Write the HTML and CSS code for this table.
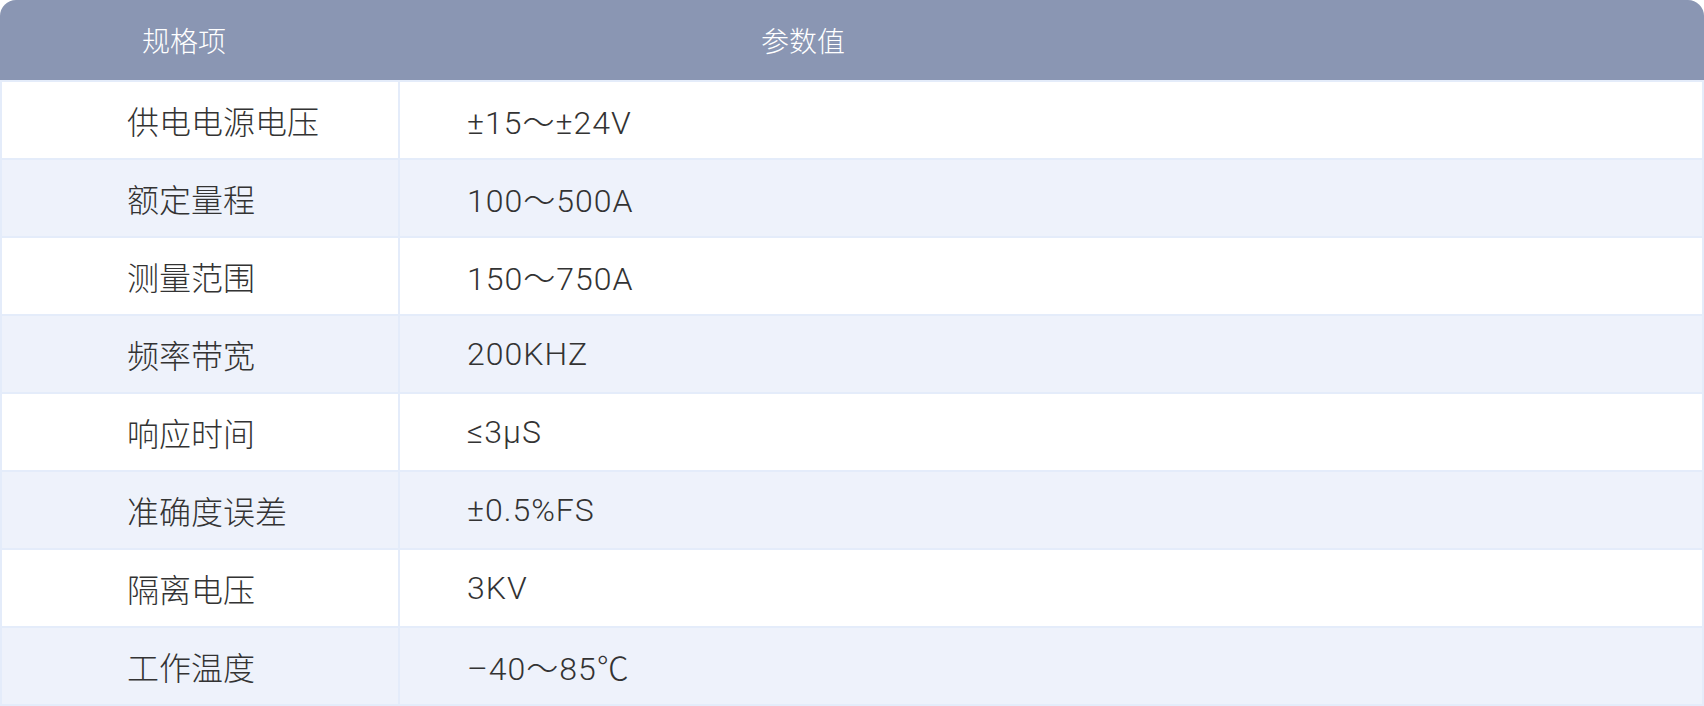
FILE: index.html
```html
<!DOCTYPE html>
<html lang="zh-CN">
<head>
<meta charset="utf-8">
<title>规格参数</title>
<link rel="stylesheet" href="styles.css">
</head>
<body>
<table class="spec">
  <thead>
    <tr>
      <th class="c1">规格项</th>
      <th class="c2">参数值</th>
    </tr>
  </thead>
  <tbody>
    <tr><td class="c1">供电电源电压</td><td class="c2">±15～±24V</td></tr>
    <tr><td class="c1">额定量程</td><td class="c2">100～500A</td></tr>
    <tr><td class="c1">测量范围</td><td class="c2">150～750A</td></tr>
    <tr><td class="c1">频率带宽</td><td class="c2">200KHZ</td></tr>
    <tr><td class="c1">响应时间</td><td class="c2">≤3μS</td></tr>
    <tr><td class="c1">准确度误差</td><td class="c2">±0.5%FS</td></tr>
    <tr><td class="c1">隔离电压</td><td class="c2">3KV</td></tr>
    <tr><td class="c1">工作温度</td><td class="c2">–40～85℃</td></tr>
  </tbody>
</table>
</body>
</html>
```

FILE: styles.css
```css
html, body {
  margin: 0;
  padding: 0;
  background: #ffffff;
}
body {
  font-family: "Roboto", "Noto Sans CJK SC", sans-serif;
  color: #333333;
}
.spec {
  width: 1704px;
  border-collapse: separate;
  border-spacing: 0;
  table-layout: fixed;
}
.spec thead th {
  height: 80px;
  padding: 0;
  background: #8a96b3;
  color: #ffffff;
  font-size: 28px;
  font-weight: 300;
  text-align: left;
  vertical-align: middle;
}
.spec thead th.c1 {
  width: 400px;
  padding-left: 142px;
  box-sizing: border-box;
  border-top-left-radius: 16px;
}
.spec thead th.c2 {
  padding-left: 361px;
  border-top-right-radius: 16px;
}
.spec tbody td {
  height: 76px;
  padding: 0;
  font-size: 32px;
  font-weight: 300;
  vertical-align: middle;
  border-bottom: 2px solid #e4ecfa;
}
.spec tbody tr:first-child td {
  border-top: 2px solid #e4ecfa;
}
.spec tbody td.c1 {
  border-left: 2px solid #e4ecfa;
  border-right: 2px solid #e4ecfa;
  padding-left: 125px;
}
.spec tbody td.c2 {
  border-right: 2px solid #e4ecfa;
  padding-left: 67px;
  letter-spacing: 1px;
}
.spec tbody tr:nth-child(even) td {
  background: #eef2fb;
}
```
